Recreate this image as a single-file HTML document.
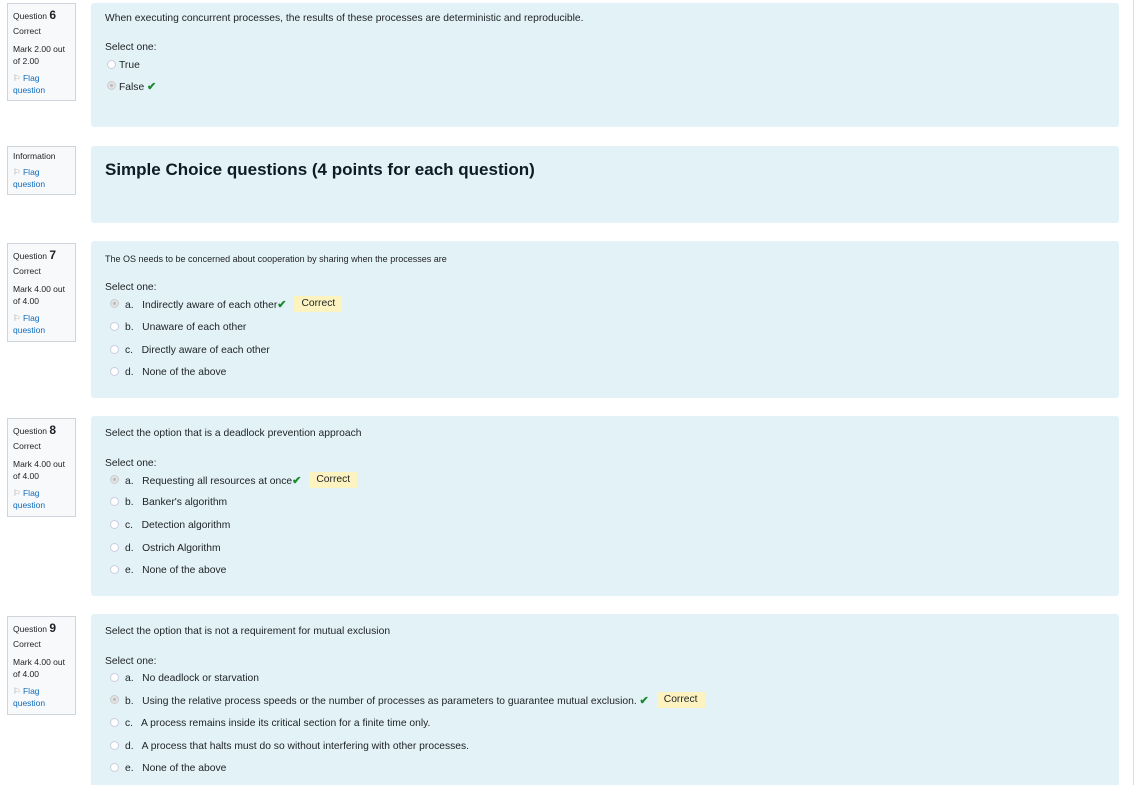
<!DOCTYPE html>
<html><head><meta charset="utf-8"><style>
*{margin:0;padding:0;box-sizing:border-box}
html,body{width:1144px;height:785px;overflow:hidden}
body{background:#fff;font-family:"Liberation Sans",sans-serif;color:#1d2125;position:relative}
.info{position:absolute;left:7px;width:69px;border:1px solid #cfd4da;background:#f8f9fa;font-size:8.5px;padding:0 5px;color:#1d2125}
.info div{position:absolute;left:5px;white-space:nowrap}
.info b{font-size:12px}
.flag{color:#0f6cbf}
.c{position:absolute;left:91px;width:1028px;background:#e3f2f7;border-radius:3px}
.t{position:absolute;font-size:10.3px;white-space:nowrap;line-height:12px;margin-top:2px}
.r{position:absolute;width:9px;height:9px;border-radius:50%;border:1px solid #ccd;background:#fff}
.r.s{background:#e3e3e3;border-color:#ccc}
.r.s:after{content:"";position:absolute;left:2px;top:2px;width:3px;height:3px;border-radius:50%;background:#bbb}
.ok{color:#1a8a2e;font-weight:bold;font-size:11px}
.bad{display:inline-block;background:#fcf3c0;padding:2px 7px;margin-left:8px;line-height:12px;margin-top:-3px;vertical-align:middle}
.vl{position:absolute;left:1133px;top:0;width:1px;height:785px;background:#ddd}
</style></head><body>
<div class="vl"></div>

<div class="info" style="top:3px;height:98px"><div style="top:4px">Question <b>6</b></div><div style="top:22px">Correct</div><div style="top:40px">Mark 2.00 out</div><div style="top:52px">of 2.00</div><div class="flag" style="top:69px"><span style="color:#999">⚐</span> Flag</div><div class="flag" style="top:81px">question</div></div>
<div class="c" style="top:3px;height:124px"></div>
<div class="t" style="left:105px;top:11px">When executing concurrent processes, the results of these processes are deterministic and reproducible.</div>
<div class="t" style="left:105px;top:40px">Select one:</div>
<div class="r" style="left:107px;top:60px"></div><div class="t" style="left:119px;top:58px">True</div>
<div class="r s" style="left:107px;top:81px"></div><div class="t" style="left:119px;top:79px">False <span class="ok">✔</span></div>

<div class="info" style="top:146px;height:49px"><div style="top:4px">Information</div><div class="flag" style="top:20px"><span style="color:#999">⚐</span> Flag</div><div class="flag" style="top:32px">question</div></div>
<div class="c" style="top:146px;height:77px"></div>
<div class="t" style="left:105px;top:158px;font-size:17px;line-height:20px;font-weight:bold;color:#0d1b24">Simple Choice questions (4 points for each question)</div>

<div class="info" style="top:243px;height:99px"><div style="top:4px">Question <b>7</b></div><div style="top:22px">Correct</div><div style="top:40px">Mark 4.00 out</div><div style="top:52px">of 4.00</div><div class="flag" style="top:69px"><span style="color:#999">⚐</span> Flag</div><div class="flag" style="top:81px">question</div></div>
<div class="c" style="top:241px;height:157px"></div>
<div class="t" style="left:105px;top:251px;font-size:9px">The OS needs to be concerned about cooperation by sharing when the processes are</div>
<div class="t" style="left:105px;top:280px">Select one:</div>
<div class="r s" style="left:110px;top:299px"></div><div class="t" style="left:125px;top:297px">a.&nbsp;&nbsp; Indirectly aware of each other<span class="ok">✔</span><span class="bad">Correct</span></div>
<div class="r" style="left:110px;top:322px"></div><div class="t" style="left:125px;top:320px">b.&nbsp;&nbsp; Unaware of each other</div>
<div class="r" style="left:110px;top:345px"></div><div class="t" style="left:125px;top:343px">c.&nbsp;&nbsp; Directly aware of each other</div>
<div class="r" style="left:110px;top:367px"></div><div class="t" style="left:125px;top:365px">d.&nbsp;&nbsp; None of the above</div>

<div class="info" style="top:418px;height:99px"><div style="top:4px">Question <b>8</b></div><div style="top:22px">Correct</div><div style="top:40px">Mark 4.00 out</div><div style="top:52px">of 4.00</div><div class="flag" style="top:69px"><span style="color:#999">⚐</span> Flag</div><div class="flag" style="top:81px">question</div></div>
<div class="c" style="top:416px;height:180px"></div>
<div class="t" style="left:105px;top:426px">Select the option that is a deadlock prevention approach</div>
<div class="t" style="left:105px;top:456px">Select one:</div>
<div class="r s" style="left:110px;top:475px"></div><div class="t" style="left:125px;top:473px">a.&nbsp;&nbsp; Requesting all resources at once<span class="ok">✔</span><span class="bad">Correct</span></div>
<div class="r" style="left:110px;top:497px"></div><div class="t" style="left:125px;top:495px">b.&nbsp;&nbsp; Banker's algorithm</div>
<div class="r" style="left:110px;top:520px"></div><div class="t" style="left:125px;top:518px">c.&nbsp;&nbsp; Detection algorithm</div>
<div class="r" style="left:110px;top:543px"></div><div class="t" style="left:125px;top:541px">d.&nbsp;&nbsp; Ostrich Algorithm</div>
<div class="r" style="left:110px;top:565px"></div><div class="t" style="left:125px;top:563px">e.&nbsp;&nbsp; None of the above</div>

<div class="info" style="top:616px;height:99px"><div style="top:4px">Question <b>9</b></div><div style="top:22px">Correct</div><div style="top:40px">Mark 4.00 out</div><div style="top:52px">of 4.00</div><div class="flag" style="top:69px"><span style="color:#999">⚐</span> Flag</div><div class="flag" style="top:81px">question</div></div>
<div class="c" style="top:614px;height:180px"></div>
<div class="t" style="left:105px;top:624px">Select the option that is not a requirement for mutual exclusion</div>
<div class="t" style="left:105px;top:654px">Select one:</div>
<div class="r" style="left:110px;top:673px"></div><div class="t" style="left:125px;top:671px">a.&nbsp;&nbsp; No deadlock or starvation</div>
<div class="r s" style="left:110px;top:695px"></div><div class="t" style="left:125px;top:693px">b.&nbsp;&nbsp; Using the relative process speeds or the number of processes as parameters to guarantee mutual exclusion. <span class="ok">✔</span><span class="bad">Correct</span></div>
<div class="r" style="left:110px;top:718px"></div><div class="t" style="left:125px;top:716px">c.&nbsp;&nbsp; A process remains inside its critical section for a finite time only.</div>
<div class="r" style="left:110px;top:741px"></div><div class="t" style="left:125px;top:739px">d.&nbsp;&nbsp; A process that halts must do so without interfering with other processes.</div>
<div class="r" style="left:110px;top:763px"></div><div class="t" style="left:125px;top:761px">e.&nbsp;&nbsp; None of the above</div>
</body></html>
